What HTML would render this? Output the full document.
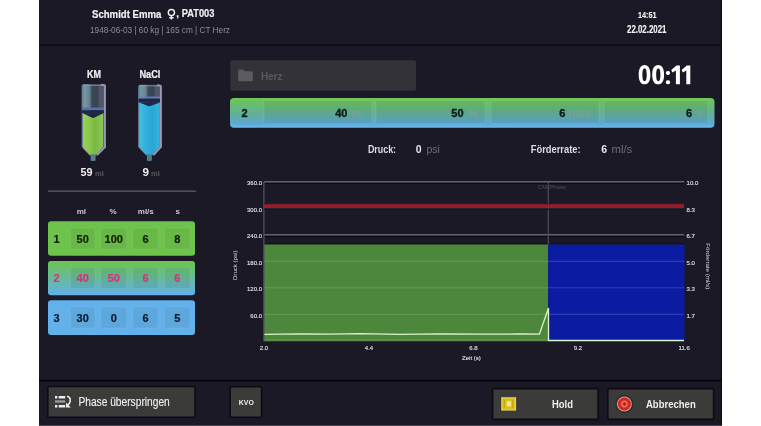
<!DOCTYPE html>
<html><head><meta charset="utf-8">
<style>
html,body{margin:0;padding:0;background:#fff;width:761px;height:426px;overflow:hidden}
svg{display:block;will-change:transform}
text{font-family:"Liberation Sans",sans-serif}
</style></head>
<body>
<svg width="761" height="426" viewBox="0 0 761 426">
<defs>
  <linearGradient id="gPh" x1="0" y1="0" x2="0" y2="1">
    <stop offset="0" stop-color="#70ca56"/>
    <stop offset="0.1" stop-color="#6cc25c"/>
    <stop offset="0.5" stop-color="#62b094"/>
    <stop offset="0.86" stop-color="#5ca8d2"/>
    <stop offset="1" stop-color="#6ab8f2"/>
  </linearGradient>
  <linearGradient id="gRow2" x1="0" y1="0" x2="0" y2="1">
    <stop offset="0" stop-color="#6cc44c"/>
    <stop offset="1" stop-color="#62b0ea"/>
  </linearGradient>
  <linearGradient id="gBarrel" x1="0" y1="0" x2="1" y2="0">
    <stop offset="0" stop-color="#5e7888"/>
    <stop offset="0.12" stop-color="#7896a6"/>
    <stop offset="0.33" stop-color="#66808f"/>
    <stop offset="0.42" stop-color="#3c4a5a"/>
    <stop offset="0.64" stop-color="#35414f"/>
    <stop offset="0.72" stop-color="#4e5466"/>
    <stop offset="1" stop-color="#565a6c"/>
  </linearGradient>
  <linearGradient id="gGreen" x1="0" y1="0" x2="1" y2="0">
    <stop offset="0" stop-color="#9ad45a"/>
    <stop offset="0.35" stop-color="#88c64c"/>
    <stop offset="0.6" stop-color="#7ab844"/>
    <stop offset="1" stop-color="#8cc858"/>
  </linearGradient>
  <linearGradient id="gBlue" x1="0" y1="0" x2="1" y2="0">
    <stop offset="0" stop-color="#44bde4"/>
    <stop offset="0.35" stop-color="#30b0dc"/>
    <stop offset="0.65" stop-color="#28a6d4"/>
    <stop offset="1" stop-color="#38b4dc"/>
  </linearGradient>
  <radialGradient id="gRed" cx="0.5" cy="0.5" r="0.5">
    <stop offset="0" stop-color="#8a1410"/>
    <stop offset="0.2" stop-color="#c03028"/>
    <stop offset="0.42" stop-color="#f27868"/>
    <stop offset="0.62" stop-color="#d82a20"/>
    <stop offset="1" stop-color="#cc1e18"/>
  </radialGradient>
</defs>

<!-- panel -->
<rect x="39" y="0" width="683" height="425" fill="#1a1925"/>
<rect x="39" y="425" width="683" height="1" fill="#46454f"/>
<rect x="720.8" y="0" width="1.2" height="425" fill="#0c0b14"/>
<rect x="39" y="44.4" width="683" height="1.6" fill="#0d0c16"/>
<rect x="39" y="379.8" width="683" height="1.6" fill="#05040c"/>

<!-- header -->
<text x="92" y="17.6" font-size="11.6" font-weight="bold" fill="#f2f2f4" stroke="#f2f2f4" stroke-width="0.2" textLength="69.4" lengthAdjust="spacingAndGlyphs">Schmidt Emma</text>
<g fill="none" stroke="#f0f0f2" stroke-width="1.4">
  <circle cx="171.4" cy="12.6" r="3.1"/>
  <path d="M171.4 15.7 V19.6 M169.2 17.8 H173.6"/>
</g>
<text x="176" y="17.3" font-size="11.6" font-weight="bold" fill="#f2f2f4">,</text>
<text x="181.7" y="17.3" font-size="11.6" font-weight="bold" fill="#f2f2f4" stroke="#f2f2f4" stroke-width="0.2" textLength="32.7" lengthAdjust="spacingAndGlyphs">PAT003</text>
<text x="90" y="33" font-size="9.6" fill="#8e8d95" textLength="140" lengthAdjust="spacingAndGlyphs">1948-06-03 | 60 kg | 165 cm | CT Herz</text>
<text x="647.2" y="18.1" font-size="9" font-weight="bold" fill="#f2f2f4" stroke="#f2f2f4" stroke-width="0.15" text-anchor="middle" textLength="18.5" lengthAdjust="spacingAndGlyphs">14:51</text>
<text x="646.7" y="32.6" font-size="10" font-weight="bold" fill="#f2f2f4" stroke="#f2f2f4" stroke-width="0.15" text-anchor="middle" textLength="39.4" lengthAdjust="spacingAndGlyphs">22.02.2021</text>

<!-- syringes -->
<text x="94" y="77.5" font-size="10" font-weight="bold" fill="#f2f2f4" stroke="#f2f2f4" stroke-width="0.2" text-anchor="middle" textLength="14" lengthAdjust="spacingAndGlyphs">KM</text>
<text x="149.9" y="77.5" font-size="10" font-weight="bold" fill="#f2f2f4" stroke="#f2f2f4" stroke-width="0.2" text-anchor="middle" textLength="21" lengthAdjust="spacingAndGlyphs">NaCl</text>

<g id="syrKM">
  <path d="M81.6 86.3 Q81.6 84.3 83.6 84.3 H104 Q106 84.3 106 86.3 V147 L97.2 155.6 H89.6 L81.6 147 Z" fill="url(#gBarrel)"/>
  <rect x="83" y="84.6" width="21" height="1.4" fill="#8aa2b0" opacity="0.6"/>
  <rect x="82" y="107.6" width="22.5" height="2.6" fill="#5174ad"/>
  <rect x="82" y="110.2" width="22.5" height="3.2" fill="#1d2648"/>
  <path d="M83 113.2 L93 118 L103.2 113.2 V146.5 L96.2 154.7 H89.7 L83 146.5 Z" fill="url(#gGreen)"/>
  <path d="M83 113.2 L93 118 L103.2 113.2 Z" fill="#1b2446"/>
  <path d="M101 84.9 H103.5 Q104.9 84.9 104.9 86.3 V147 L97 155.2" fill="none" stroke="#9896b2" stroke-width="1.9"/>
  <rect x="90.6" y="154.5" width="5" height="6.4" rx="1" fill="#5a7a8a"/>
</g>
<g>
  <path d="M138.1 86.8 Q138.1 84.8 140.1 84.8 H159.8 Q161.8 84.8 161.8 86.8 V147 L153.8 155.6 H146.2 L138.1 147 Z" fill="url(#gBarrel)"/>
  <rect x="139.5" y="85.1" width="20.5" height="1.4" fill="#8aa2b0" opacity="0.6"/>
  <rect x="138.5" y="96.6" width="22" height="2" fill="#5f80c0"/>
  <rect x="138.5" y="98.6" width="22" height="4" fill="#22254a"/>
  <path d="M139.3 102.6 L149 106.2 L159.8 102.6 V146.5 L152.8 154.7 H146.3 L139.3 146.5 Z" fill="url(#gBlue)"/>
  <path d="M139.3 102.6 L149 106.2 L159.8 102.6 Z" fill="#1f2448"/>
  <path d="M157 85.4 H159.5 Q160.9 85.4 160.9 86.8 V147 L153.4 155.2" fill="none" stroke="#9896b2" stroke-width="1.9"/>
  <rect x="146.9" y="154.5" width="5" height="6.4" rx="1" fill="#4d7c8e"/>
</g>

<text x="80.6" y="176" font-size="11.6" font-weight="bold" fill="#f2f2f4" textLength="12" lengthAdjust="spacingAndGlyphs">59</text>
<text x="95" y="175.6" font-size="7.6" font-weight="bold" fill="#57565e">ml</text>
<text x="142.4" y="176" font-size="11.6" font-weight="bold" fill="#f2f2f4">9</text>
<text x="151" y="175.6" font-size="7.6" font-weight="bold" fill="#57565e">ml</text>

<rect x="48" y="190.4" width="148" height="1.5" fill="#55545e"/>

<!-- table header -->
<g font-size="8" font-weight="bold" fill="#c9c8d0" text-anchor="middle">
  <text x="81.4" y="213.5">ml</text>
  <text x="113" y="213.5">%</text>
  <text x="145.8" y="213.5">ml/s</text>
  <text x="177.7" y="213.5">s</text>
</g>

<!-- rows -->
<rect x="48" y="221.3" width="147" height="34.5" rx="3" fill="#6dc34c"/>
<g fill="#000" fill-opacity="0.055" stroke="#ffffff" stroke-opacity="0.07" stroke-width="1">
  <rect x="70.5" y="228" width="24.5" height="21" rx="2"/>
  <rect x="101" y="228" width="25.6" height="21" rx="2"/>
  <rect x="133" y="228" width="25" height="21" rx="2"/>
  <rect x="164.5" y="228" width="25.5" height="21" rx="2"/>
</g>
<g font-size="11" font-weight="bold" fill="#0e1a08" stroke="#0e1a08" stroke-width="0.15" text-anchor="middle">
  <text x="56.5" y="242.5">1</text>
  <text x="82.7" y="242.5">50</text>
  <text x="113.8" y="242.5">100</text>
  <text x="145.5" y="242.5">6</text>
  <text x="177.2" y="242.5">8</text>
</g>

<rect x="48" y="260.9" width="147" height="34.3" rx="3" fill="url(#gRow2)"/>
<g fill="#000" fill-opacity="0.055" stroke="#ffffff" stroke-opacity="0.07" stroke-width="1">
  <rect x="70.5" y="267.5" width="24.5" height="21" rx="2"/>
  <rect x="101" y="267.5" width="25.6" height="21" rx="2"/>
  <rect x="133" y="267.5" width="25" height="21" rx="2"/>
  <rect x="164.5" y="267.5" width="25.5" height="21" rx="2"/>
</g>
<g font-size="11" font-weight="bold" fill="#d8307a" stroke="#d8307a" stroke-width="0.15" text-anchor="middle">
  <text x="56.5" y="282">2</text>
  <text x="82.7" y="282">40</text>
  <text x="113.8" y="282">50</text>
  <text x="145.5" y="282">6</text>
  <text x="177.2" y="282">6</text>
</g>

<rect x="48" y="300.2" width="147" height="34.8" rx="3" fill="#63b1ea"/>
<g fill="#000" fill-opacity="0.055" stroke="#ffffff" stroke-opacity="0.07" stroke-width="1">
  <rect x="70.5" y="307" width="24.5" height="21" rx="2"/>
  <rect x="101" y="307" width="25.6" height="21" rx="2"/>
  <rect x="133" y="307" width="25" height="21" rx="2"/>
  <rect x="164.5" y="307" width="25.5" height="21" rx="2"/>
</g>
<g font-size="11" font-weight="bold" fill="#0a1424" stroke="#0a1424" stroke-width="0.15" text-anchor="middle">
  <text x="56.5" y="321.5">3</text>
  <text x="82.7" y="321.5">30</text>
  <text x="113.8" y="321.5">0</text>
  <text x="145.5" y="321.5">6</text>
  <text x="177.2" y="321.5">5</text>
</g>

<!-- Herz box -->
<rect x="230.3" y="60.3" width="185.7" height="30.4" rx="2" fill="#333238"/>
<path d="M238.2 70.6 q0 -1.2 1.2 -1.2 h3.6 l1.6 1.8 h7 q1.2 0 1.2 1.2 v7.6 q0 1.2 -1.2 1.2 h-12.2 q-1.2 0 -1.2 -1.2 z" fill="#5c5b62"/>
<text x="260.9" y="79.8" font-size="11" font-weight="bold" fill="#5a5960" textLength="21.5" lengthAdjust="spacingAndGlyphs">Herz</text>

<!-- timer -->
<g fill="#ffffff">
  <path fill-rule="evenodd" d="M644.55 65.1 C648.4 65.1 650.4 68.6 650.4 74.7 C650.4 80.8 648.4 84.3 644.55 84.3 C640.7 84.3 638.7 80.8 638.7 74.7 C638.7 68.6 640.7 65.1 644.55 65.1 Z M644.55 68.4 C643.1 68.4 642.4 70.2 642.4 74.8 C642.4 79.4 643.1 81.2 644.55 81.2 C646 81.2 646.7 79.4 646.7 74.8 C646.7 70.2 646 68.4 644.55 68.4 Z"/>
  <path fill-rule="evenodd" d="M658.15 65.1 C662.1 65.1 664.1 68.6 664.1 74.7 C664.1 80.8 662.1 84.3 658.15 84.3 C654.2 84.3 652.2 80.8 652.2 74.7 C652.2 68.6 654.2 65.1 658.15 65.1 Z M658.3 68.4 C656.9 68.4 656.2 70.2 656.2 74.8 C656.2 79.4 656.9 81.2 658.3 81.2 C659.7 81.2 660.4 79.4 660.4 74.8 C660.4 70.2 659.7 68.4 658.3 68.4 Z"/>
  <rect x="665.8" y="70.9" width="4.3" height="4" rx="1.8"/>
  <rect x="665.8" y="80.3" width="4.3" height="4" rx="1.8"/>
  <path d="M679.9 65.4 V84.3 H675.9 V70.4 L672.5 72.6 L671.2 69.9 L676.4 65.4 Z"/>
  <path d="M690.3 65.4 V84.3 H686.3 V70.4 L682.9 72.6 L681.6 69.9 L686.8 65.4 Z"/>
</g>

<!-- phase bar -->
<rect x="230" y="97.9" width="484.5" height="29.8" rx="4" fill="url(#gPh)"/>
<g fill="#000" fill-opacity="0.05" stroke="#ffffff" stroke-opacity="0.1" stroke-width="1">
  <rect x="264" y="100.4" width="108" height="23.1"/>
  <rect x="376" y="100.4" width="109.6" height="23.1"/>
  <rect x="491" y="100.4" width="108" height="23.1"/>
  <rect x="604" y="100.4" width="104" height="23.1"/>
</g>
<g font-size="11" font-weight="bold" fill="#0a1a14" stroke="#0a1a14" stroke-width="0.3">
  <text x="241.6" y="116.8">2</text>
  <text x="347.4" y="116.8" text-anchor="end">40</text>
  <text x="463.6" y="116.8" text-anchor="end">50</text>
  <text x="565.4" y="116.8" text-anchor="end">6</text>
  <text x="692" y="116.8" text-anchor="end">6</text>
</g>
<g font-size="10" fill="#7fa49a">
  <text x="352" y="116.8">ml</text>
  <text x="468.8" y="116.8">%</text>
  <text x="569.4" y="116.8" textLength="21" lengthAdjust="spacingAndGlyphs">ml/s</text>
  <text x="696.7" y="116.8">s</text>
</g>

<!-- Druck / Förderrate -->
<text x="367.9" y="152.7" font-size="10.5" font-weight="bold" fill="#dcdce2" textLength="28.2" lengthAdjust="spacingAndGlyphs">Druck:</text>
<text x="415.8" y="152.7" font-size="10.5" font-weight="bold" fill="#e6e6ea">0</text>
<text x="426.4" y="152.7" font-size="10.5" fill="#6e6d76" textLength="13.6" lengthAdjust="spacingAndGlyphs">psi</text>
<text x="530.7" y="152.7" font-size="10.5" font-weight="bold" fill="#dcdce2" textLength="50" lengthAdjust="spacingAndGlyphs">Förderrate:</text>
<text x="601.2" y="152.7" font-size="10.5" font-weight="bold" fill="#e6e6ea">6</text>
<text x="611.5" y="152.7" font-size="10.5" fill="#6e6d76" textLength="20.8" lengthAdjust="spacingAndGlyphs">ml/s</text>

<!-- chart -->
<g>
  <rect x="263.6" y="243" width="420.8" height="1.5" fill="#0c0b14" opacity="0.6"/>
  <rect x="263.8" y="244.5" width="284.4" height="96.8" fill="#4c873c"/>
  <rect x="548.2" y="244.5" width="136.3" height="96.8" fill="#0b1ca2"/>
  <g stroke="#ffffff" stroke-opacity="0.17" stroke-width="1">
    <line x1="264" y1="261.3" x2="684" y2="261.3"/>
    <line x1="264" y1="287.8" x2="684" y2="287.8"/>
    <line x1="264" y1="314.3" x2="684" y2="314.3"/>
    <line x1="264" y1="339.8" x2="548" y2="339.8" stroke-opacity="0.15"/>
  </g>
  <g stroke="#0c0b14" stroke-width="1">
    <line x1="264" y1="183.6" x2="684" y2="183.6"/>
    <line x1="264" y1="236.6" x2="684" y2="236.6"/>
  </g>
  <g stroke="#62616e" stroke-width="1.6">
    <line x1="264" y1="181.7" x2="684" y2="181.7"/>
    <line x1="264" y1="234.7" x2="684" y2="234.7"/>
  </g>
  <line x1="263.9" y1="181.5" x2="263.9" y2="341.3" stroke="#50525c" stroke-width="1.3"/>
  <line x1="548.3" y1="182" x2="548.3" y2="244.5" stroke="#4e4e5a" stroke-width="1.2"/>
  <rect x="264" y="203.2" width="420" height="1.2" fill="#3e1622"/>
  <rect x="264" y="204.2" width="420" height="3" fill="#9a1c28"/>
  <rect x="264" y="207.4" width="420" height="1" fill="#6e4c5a"/>
  <rect x="264" y="208.6" width="420" height="1" fill="#12121c"/>
  <text x="552" y="189.2" font-size="6" fill="#4f4e58" text-anchor="middle">CM-Phase</text>
  <path d="M264.5 334.3 L300 333.8 L330 334.2 L360 333.6 L400 334.4 L440 333.8 L480 334.2 L520 334 L539.4 334.1 L548.5 308 L548.5 340.5 L684 340.5" fill="none" stroke="#dcf4cc" stroke-width="1.3"/>
  <g font-size="6" fill="#e2e2e8" stroke="#e2e2e8" stroke-width="0.12" text-anchor="end">
    <text x="262" y="185.2">360.0</text>
    <text x="262" y="211.7">300.0</text>
    <text x="262" y="238.2">240.0</text>
    <text x="262" y="264.7">180.0</text>
    <text x="262" y="291.2">120.0</text>
    <text x="262" y="317.7">60.0</text>
  </g>
  <g font-size="6" fill="#e2e2e8" stroke="#e2e2e8" stroke-width="0.12">
    <text x="686.6" y="185.2">10.0</text>
    <text x="686.6" y="211.7">8.3</text>
    <text x="686.6" y="238.2">6.7</text>
    <text x="686.6" y="264.7">5.0</text>
    <text x="686.6" y="291.2">3.3</text>
    <text x="686.6" y="317.7">1.7</text>
  </g>
  <g font-size="6" fill="#e2e2e8" stroke="#e2e2e8" stroke-width="0.12" text-anchor="middle">
    <text x="264" y="350">2.0</text>
    <text x="369" y="350">4.4</text>
    <text x="473.5" y="350">6.8</text>
    <text x="578" y="350">9.2</text>
    <text x="684.2" y="350">11.6</text>
    <text x="471.4" y="360">Zeit (s)</text>
  </g>
  <text transform="translate(237.2 265.3) rotate(-90)" font-size="6.1" fill="#d8d8de" text-anchor="middle">Druck (psi)</text>
  <text transform="translate(706.3 266.2) rotate(90)" font-size="6.2" fill="#d8d8de" text-anchor="middle">Förderrate (ml/s)</text>
</g>

<!-- bottom buttons -->
<rect x="47.8" y="386.5" width="147.3" height="30.7" rx="1" fill="#3b3b3a" stroke="#0c0b13" stroke-width="1.6"/>
<g fill="#ececee">
  <rect x="55" y="396" width="2.4" height="2.5"/>
  <rect x="58.7" y="396" width="6.5" height="2.5"/>
  <rect x="55" y="400.3" width="10.2" height="2.4" fill="#9a9a9c"/>
  <rect x="55" y="405" width="2.4" height="2.5"/>
  <rect x="58.7" y="405" width="6.5" height="2.5"/>
  <path d="M66 402.6 L66 407.6 L70.8 407.6 Z"/>
</g>
<path d="M67 396.2 Q70.6 397 70.2 400.8 Q69.8 404 67.6 405" fill="none" stroke="#ececee" stroke-width="1.6"/>
<text x="78.4" y="406" font-size="12.2" fill="#ececee" stroke="#ececee" stroke-width="0.15" textLength="91.4" lengthAdjust="spacingAndGlyphs">Phase überspringen</text>

<rect x="230.2" y="386.8" width="31.4" height="30.5" rx="1" fill="#3b3b3a" stroke="#0c0b13" stroke-width="1.6"/>
<text x="246.3" y="405.4" font-size="8" font-weight="bold" fill="#eeeeef" text-anchor="middle" textLength="15" lengthAdjust="spacingAndGlyphs">KVO</text>

<rect x="492.6" y="388.6" width="105.5" height="30.8" rx="1" fill="#3b3b3a" stroke="#0c0b13" stroke-width="1.6"/>
<rect x="501.2" y="397.2" width="14.9" height="13.4" fill="#e4d060"/>
<rect x="502.4" y="398.4" width="12.5" height="11" fill="#dcc01a"/>
<rect x="503.6" y="399.4" width="1.4" height="9" fill="#c8a810"/>
<rect x="512" y="399.4" width="1.4" height="9" fill="#c8a810"/>
<rect x="506.6" y="401" width="4.6" height="5.6" rx="1.5" fill="#f2e48e"/>
<text x="552" y="408.4" font-size="11.5" font-weight="bold" fill="#eeeeef" textLength="21" lengthAdjust="spacingAndGlyphs">Hold</text>

<rect x="607.8" y="388.6" width="105.8" height="30.8" rx="1" fill="#3b3b3a" stroke="#0c0b13" stroke-width="1.6"/>
<circle cx="624.4" cy="404" r="9.2" fill="#2f2f33"/>
<circle cx="624.4" cy="404" r="7.5" fill="#dc9a8a"/>
<circle cx="624.4" cy="404" r="6.4" fill="url(#gRed)"/>
<text x="646" y="408.2" font-size="11.5" font-weight="bold" fill="#eeeeef" textLength="49.7" lengthAdjust="spacingAndGlyphs">Abbrechen</text>

</svg>
</body></html>
